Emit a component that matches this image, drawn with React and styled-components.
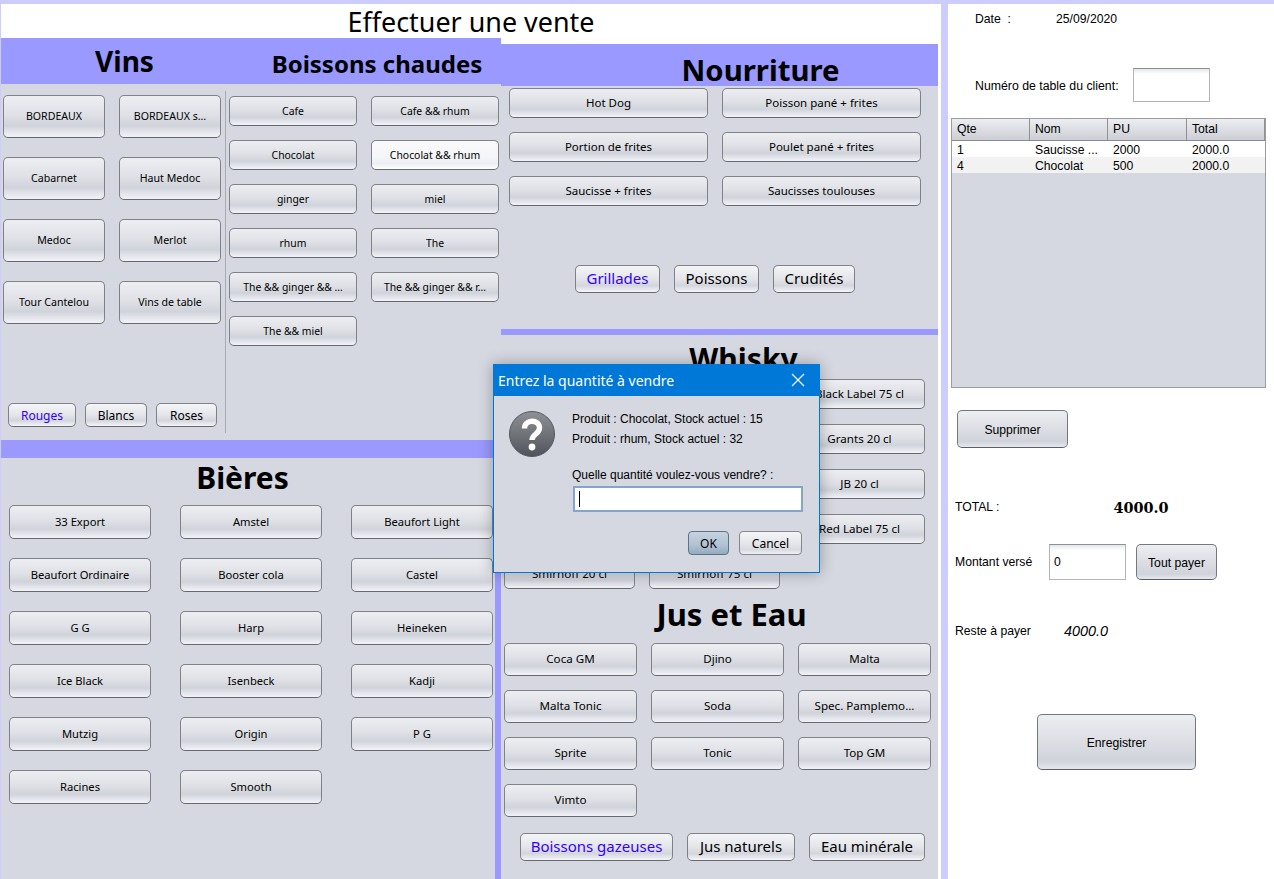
import React from "react";
import styled, { createGlobalStyle, css } from "styled-components";

const vins = ["BORDEAUX", "BORDEAUX s…", "Cabarnet", "Haut Medoc", "Medoc", "Merlot", "Tour Cantelou", "Vins de table"];
const chaudes = ["Cafe", "Cafe && rhum", "Chocolat", "Chocolat && rhum", "ginger", "miel", "rhum", "The", "The && ginger && …", "The && ginger && r…", "The && miel"];
const bieres = ["33 Export", "Amstel", "Beaufort Light", "Beaufort Ordinaire", "Booster cola", "Castel", "G G", "Harp", "Heineken", "Ice Black", "Isenbeck", "Kadji", "Mutzig", "Origin", "P G", "Racines", "Smooth"];
const nourriture = ["Hot Dog", "Poisson pané + frites", "Portion de frites", "Poulet pané + frites", "Saucisse + frites", "Saucisses toulouses"];
// the first cells of these rows sit behind the dialog, their labels can't be read
const whisky = ["", "", "Black Label 75 cl", "", "", "Grants 20 cl", "", "", "JB 20 cl", "", "", "Red Label 75 cl", "Smirnoff 20 cl", "Smirnoff 75 cl"];
const jus = ["Coca GM", "Djino", "Malta", "Malta Tonic", "Soda", "Spec. Pamplemo...", "Sprite", "Tonic", "Top GM", "Vimto"];

const App = () => (
  <Shell>
    <GlobalStyle />
    <Main>
      <PageTitle>Effectuer une vente</PageTitle>
      <Columns>
        <LeftColumn>
          <TopLeft>
            <Band $height={46}>
              <BandTitle $width={247} $size={28} $line={46}>Vins</BandTitle>
              <BandTitle $width={253} $size={24} $line={51} $pad={5}>Boissons chaudes</BandTitle>
            </Band>
            <TopLeftBody>
              <VinsPane>
                <ProductGrid $cols={2} $colW={102} $rowH={43} $rowGap={19} $colGap={14} $size={10.6} $lift={2}>
                  {vins.map((v) => <ProductButton key={v}>{v}</ProductButton>)}
                </ProductGrid>
                <TabRow $left={5} $gap={9} $top="auto">
                  <TabButton $w={68} $h={24} $size={12} $active>Rouges</TabButton>
                  <TabButton $w={62} $h={24} $size={12}>Blancs</TabButton>
                  <TabButton $w={61} $h={24} $size={12}>Roses</TabButton>
                </TabRow>
              </VinsPane>
              <ChaudesPane>
                <ProductGrid $cols={2} $colW={128} $rowH={30} $rowGap={14} $colGap={14} $size={10.4}>
                  {chaudes.map((c) => (
                    <ProductButton key={c} $selected={c === "Chocolat && rhum"}>{c}</ProductButton>
                  ))}
                </ProductGrid>
              </ChaudesPane>
            </TopLeftBody>
          </TopLeft>
          <Band $height={18} />
          <BottomLeft>
            <BieresPane>
              <SectionTitle $height={47} $line={39} $pad={0} $width={467} $size={30}>Bières</SectionTitle>
              <ProductGrid $cols={3} $colW={142} $rowH={34} $rowGap={19} $colGap={29} $size={11.2} $lift={2}>
                {bieres.map((b) => <ProductButton key={b}>{b}</ProductButton>)}
              </ProductGrid>
            </BieresPane>
            <Strip />
          </BottomLeft>
        </LeftColumn>

        <RightColumn>
          <NourritureBand><BandTitle $width={437} $size={29.3} $pad={82} $line={52}>Nourriture</BandTitle></NourritureBand>
          <NourritureBody>
            <ProductGrid $cols={2} $colW={199} $rowH={30} $rowGap={14} $colGap={14} $size={11.5} $lift={2}>
              {nourriture.map((n) => <ProductButton key={n}>{n}</ProductButton>)}
            </ProductGrid>
            <TabRow $left={66} $gap={14} $top="59px">
              <TabButton $w={85} $h={28} $size={15} $active>Grillades</TabButton>
              <TabButton $w={85} $h={28} $size={15}>Poissons</TabButton>
              <TabButton $w={82} $h={28} $size={15}>Crudités</TabButton>
            </TabRow>
          </NourritureBody>
          <Band $height={6} />
          <DrinksBody>
            <SectionTitle $height={44} $line={44} $pad={58} $width={421} $size={30} $shift={2}>Whisky</SectionTitle>
            <ProductGrid $cols={3} $colW={131} $rowH={30} $rowGap={15} $colGap={14} $size={11.6} $lift={2}>
              {whisky.map((w, i) => <ProductButton key={i}>{w}</ProductButton>)}
            </ProductGrid>
            <SectionTitle $height={54} $line={50} $pad={28} $width={427} $size={31}>Jus et Eau</SectionTitle>
            <ProductGrid $cols={3} $colW={133} $rowH={33} $rowGap={14} $colGap={14} $size={11.6} $lift={2}>
              {jus.map((j) => <ProductButton key={j}>{j}</ProductButton>)}
            </ProductGrid>
            <TabRow $left={16} $gap={14} $top="16px">
              <TabButton $w={153} $h={28} $size={15} $active>Boissons gazeuses</TabButton>
              <TabButton $w={108} $h={28} $size={15}>Jus naturels</TabButton>
              <TabButton $w={116} $h={28} $size={15}>Eau minérale</TabButton>
            </TabRow>
          </DrinksBody>
        </RightColumn>
      </Columns>
    </Main>

    <SidePanel>
      <DateRow>
        <DateLabel>Date&nbsp;&nbsp;:</DateLabel>
        <span>25/09/2020</span>
      </DateRow>
      <TableRow>
        <TableLabel>Numéro de table du client:</TableLabel>
        <Field $w={77} $h={34} />
      </TableRow>
      <SaleTable>
        <TableHead>
          <HeadCell $w={78}>Qte</HeadCell>
          <HeadCell $w={78}>Nom</HeadCell>
          <HeadCell $w={79}>PU</HeadCell>
          <HeadCell $w={78}>Total</HeadCell>
        </TableHead>
        <SaleRow><Cell $w={78}>1</Cell><Cell $w={78}>Saucisse ...</Cell><Cell $w={79}>2000</Cell><Cell $w={78}>2000.0</Cell></SaleRow>
        <SaleRow $alt><Cell $w={78}>4</Cell><Cell $w={78}>Chocolat</Cell><Cell $w={79}>500</Cell><Cell $w={78}>2000.0</Cell></SaleRow>
      </SaleTable>
      <ActionButton $w={111} $h={38} $left={6} $top={22}>Supprimer</ActionButton>
      <TotalRow>
        <span>TOTAL :</span>
        <TotalValue>4000.0</TotalValue>
      </TotalRow>
      <PayRow>
        <PayLabel>Montant versé</PayLabel>
        <Field $w={77} $h={36}>0</Field>
        <ActionButton $w={81} $h={36} $left={10} $top={0}>Tout payer</ActionButton>
      </PayRow>
      <RestRow>
        <RestLabel>Reste à payer</RestLabel>
        <RestValue>4000.0</RestValue>
      </RestRow>
      <ActionButton $w={159} $h={56} $left={86} $top={73}>Enregistrer</ActionButton>
    </SidePanel>

    <Dialog>
      <DialogBar>
        <span>Entrez la quantité à vendre</span>
        <svg width="14" height="14" viewBox="0 0 14 14">
          <path d="M1 1 L13 13 M13 1 L1 13" stroke="#fff" strokeWidth="1.1" fill="none" />
        </svg>
      </DialogBar>
      <DialogBody>
        <svg width="46" height="46" viewBox="0 0 46 46">
          <defs>
            <linearGradient id="help" x1="0" y1="0" x2="0" y2="1">
              <stop offset="0" stopColor="#8d9094" />
              <stop offset="0.55" stopColor="#6d7075" />
              <stop offset="1" stopColor="#50535a" />
            </linearGradient>
          </defs>
          <circle cx="23" cy="23" r="22.5" fill="url(#help)" stroke="#55585d" />
          <path d="M15.5 17.5 C15.5 8 30.5 8 30.5 17 C30.5 23 23 23 23 29" fill="none" stroke="#fff" strokeWidth="5.4" />
          <circle cx="23" cy="36" r="3.4" fill="#fff" />
        </svg>
        <DialogContent>
          <DialogLine>Produit : Chocolat, Stock actuel : 15</DialogLine>
          <DialogLine>Produit : rhum, Stock actuel : 32</DialogLine>
          <DialogPrompt>Quelle quantité voulez-vous vendre? :</DialogPrompt>
          <QuantityInput><Caret /></QuantityInput>
          <DialogActions>
            <DialogButton $w={41} $primary>OK</DialogButton>
            <DialogButton $w={63}>Cancel</DialogButton>
          </DialogActions>
        </DialogContent>
      </DialogBody>
    </Dialog>
  </Shell>
);

const GlobalStyle = createGlobalStyle`
  html, body {
    margin: 0;
    overflow: hidden;
  }
  * {
    box-sizing: border-box;
  }
`;

const panelGrey = "#d5d8e0";
const bandBlue = "#9999ff";
const lavender = "#ccccff";

const Shell = styled.div`
  position: relative;
  display: flex;
  width: 1274px;
  height: 879px;
  padding: 4px 0 0 1px;
  background-color: ${lavender};
  overflow: hidden;
  font-family: "Noto Sans", sans-serif;
  color: #000;
`;

const Main = styled.div`
  width: 940px;
  height: 875px;
  background-color: #fff;
`;

const PageTitle = styled.div`
  height: 34px;
  font-size: 26.9px;
  line-height: 36px;
  text-align: center;
`;

const Columns = styled.div`
  display: flex;
  width: 937px;
  height: 841px;
`;

const LeftColumn = styled.div`
  display: flex;
  flex-direction: column;
  width: 500px;
`;

const RightColumn = styled.div`
  display: flex;
  flex-direction: column;
  width: 437px;
  padding-top: 6px;
`;

const TopLeft = styled.div`
  height: 402px;
  background-color: ${panelGrey};
`;

const Band = styled.div`
  display: flex;
  height: ${({ $height }) => $height}px;
  background-color: ${bandBlue};
  flex-shrink: 0;
`;

const NourritureBand = styled(Band).attrs({ $height: 42 })``;

const BandTitle = styled.div`
  width: ${({ $width }) => $width}px;
  padding-left: ${({ $pad }) => $pad || 0}px;
  font-size: ${({ $size }) => $size}px;
  font-weight: 700;
  line-height: ${({ $line }) => $line}px;
  text-align: center;
  white-space: nowrap;
`;

const TopLeftBody = styled.div`
  display: flex;
  height: 356px;
  padding: 7px 0;
`;

const VinsPane = styled.div`
  display: flex;
  flex-direction: column;
  width: 224px;
  padding: 4px 0 6px 2px;
`;

const ChaudesPane = styled.div`
  width: 275px;
  padding: 5px 0 0 3px;
  border-left: 1px solid #a9abb0;
`;

const ProductGrid = styled.div`
  display: grid;
  grid-template-columns: repeat(${({ $cols }) => $cols}, ${({ $colW }) => $colW}px);
  grid-auto-rows: ${({ $rowH }) => $rowH}px;
  row-gap: ${({ $rowGap }) => $rowGap}px;
  column-gap: ${({ $colGap }) => $colGap}px;
  font-size: ${({ $size }) => $size}px;
  & > button {
    padding-bottom: ${({ $lift }) => $lift || 0}px;
  }
`;

const bevel = css`
  padding: 0 2px;
  border: 1px solid #808287;
  border-bottom-color: #67696e;
  border-radius: 5px;
  color: #000;
  font-family: "Noto Sans", sans-serif;
  white-space: nowrap;
  overflow: hidden;
  cursor: pointer;
`;

const ProductButton = styled.button`
  ${bevel}
  font-size: inherit;
  background: ${({ $selected }) =>
    $selected
      ? "linear-gradient(#fafafc 0%, #f4f5f8 60%, #eceef3 80%, #fff 100%)"
      : "linear-gradient(#eceef2 0%, #dfe1e6 45%, #d0d3da 72%, #e6e8ee 90%, #f2f3f7 100%)"};
`;

const TabRow = styled.div`
  display: flex;
  gap: ${({ $gap }) => $gap}px;
  padding-left: ${({ $left }) => $left}px;
  margin-top: ${({ $top }) => $top};
`;

const TabButton = styled.button`
  ${bevel}
  width: ${({ $w }) => $w}px;
  height: ${({ $h }) => $h}px;
  padding-bottom: ${({ $size }) => ($size > 12 ? 2 : 0)}px;
  font-size: ${({ $size }) => $size}px;
  color: ${({ $active }) => ($active ? "#3300ff" : "#000")};
  background: linear-gradient(#f4f5f7 0%, #e3e5ea 50%, #d3d6dc 75%, #f4f5f9 100%);
`;

const BottomLeft = styled.div`
  display: flex;
  flex: 1;
`;

const BieresPane = styled.div`
  width: 494px;
  padding-left: 8px;
  background-color: ${panelGrey};
`;

const Strip = styled.div`
  width: 6px;
  background-color: ${bandBlue};
`;

const SectionTitle = styled.div`
  width: ${({ $width }) => $width}px;
  height: ${({ $height }) => $height}px;
  padding-left: ${({ $pad }) => $pad}px;
  padding-top: ${({ $shift }) => $shift || 0}px;
  font-size: ${({ $size }) => $size}px;
  font-weight: 700;
  line-height: ${({ $line }) => $line}px;
  text-align: center;
  white-space: nowrap;
`;

const NourritureBody = styled.div`
  height: 243px;
  padding: 2px 0 0 8px;
  background-color: ${panelGrey};
`;

const DrinksBody = styled.div`
  flex: 1;
  padding-left: 3px;
  background-color: ${panelGrey};
`;

const SidePanel = styled.div`
  width: 326px;
  height: 875px;
  margin-left: 7px;
  padding: 0 8px 0 3px;
  background-color: #fff;
  font-family: "Liberation Sans", Arial, sans-serif;
  font-size: 12.2px;
  color: #000;
`;

const DateRow = styled.div`
  display: flex;
  height: 30px;
  padding-left: 24px;
  align-items: center;
`;

const DateLabel = styled.span`
  width: 81px;
`;

const TableRow = styled.div`
  display: flex;
  align-items: center;
  gap: 14px;
  margin-top: 34px;
  padding-left: 24px;
  font-size: 12.3px;
`;

const TableLabel = styled.span`
  padding-top: 2px;
`;

const Field = styled.div`
  display: flex;
  align-items: center;
  width: ${({ $w }) => $w}px;
  height: ${({ $h }) => $h}px;
  padding-left: 4px;
  background: linear-gradient(#e4e6ea 0, #fff 5px);
  border: 1px solid #b4b5b8;
  border-top-color: #8e9094;
`;

const SaleTable = styled.div`
  width: 315px;
  height: 270px;
  margin-top: 16px;
  background-color: ${panelGrey};
  border: 1px solid #9a9ca2;
`;

const TableHead = styled.div`
  display: flex;
  height: 22px;
  border-bottom: 1px solid #8a8c92;
  background: linear-gradient(#eceef1, #ccced5);
`;

const HeadCell = styled.div`
  width: ${({ $w }) => $w}px;
  padding-left: 5px;
  line-height: 21px;
  border-right: 1px solid #8f9197;
`;

const SaleRow = styled.div`
  display: flex;
  height: 16px;
  background-color: ${({ $alt }) => ($alt ? "#f2f2f2" : "#fff")};
`;

const Cell = styled.div`
  width: ${({ $w }) => $w}px;
  padding-left: 5px;
  line-height: 18px;
  white-space: nowrap;
`;

const ActionButton = styled.button`
  width: ${({ $w }) => $w}px;
  height: ${({ $h }) => $h}px;
  margin-left: ${({ $left }) => $left}px;
  margin-top: ${({ $top }) => $top}px;
  padding: 2px 0 0;
  border: 1px solid #76787d;
  border-bottom-color: #5c5e63;
  border-radius: 5px;
  background: linear-gradient(#eceef1 0%, #dcdee4 50%, #d0d3da 85%, #e6e8ee 100%);
  color: #000;
  font-family: "Liberation Sans", Arial, sans-serif;
  font-size: 12.2px;
  display: block;
  flex-shrink: 0;
`;

const TotalRow = styled.div`
  display: flex;
  align-items: center;
  margin-top: 49px;
  padding-left: 4px;
  height: 20px;
`;

const TotalValue = styled.span`
  margin-left: 114px;
  font-family: "DejaVu Serif", serif;
  font-size: 14.4px;
  font-weight: 700;
`;

const PayRow = styled.div`
  display: flex;
  align-items: center;
  margin-top: 27px;
  padding-left: 4px;
`;

const PayLabel = styled.span`
  width: 94px;
`;

const RestRow = styled.div`
  display: flex;
  align-items: center;
  height: 20px;
  margin-top: 41px;
  padding-left: 4px;
`;

const RestLabel = styled.span`
  width: 109px;
`;

const RestValue = styled.span`
  font-size: 14.4px;
  font-style: italic;
`;

const Dialog = styled.div`
  position: absolute;
  left: 493px;
  top: 364px;
  width: 327px;
  height: 209px;
  background-color: ${panelGrey};
  border: 1px solid #0078d7;
  box-shadow: 0 0 14px rgba(0, 0, 0, 0.3);
  font-family: "Liberation Sans", Arial, sans-serif;
  font-size: 12px;
  color: #000;
`;

const DialogBar = styled.div`
  display: flex;
  align-items: center;
  justify-content: space-between;
  height: 32px;
  margin: -1px -1px 0;
  padding: 0 15px 0 5px;
  background-color: #0078d7;
  color: #fff;
  font-family: "Noto Sans", sans-serif;
  font-size: 14px;
`;

const DialogBody = styled.div`
  display: flex;
  padding: 15px 0 0 15px;
`;

const DialogContent = styled.div`
  display: flex;
  flex-direction: column;
  width: 230px;
  margin: -2px 0 0 17px;
`;

const DialogLine = styled.div`
  height: 20px;
  line-height: 20px;
`;

const DialogPrompt = styled(DialogLine)`
  margin-top: 16px;
`;

const QuantityInput = styled.div`
  display: flex;
  align-items: center;
  flex-shrink: 0;
  width: 230px;
  height: 26px;
  margin: 1px 0 0 1px;
  padding-left: 4px;
  background-color: #fff;
  border: 2px solid #84a6cc;
`;

const Caret = styled.span`
  width: 1px;
  height: 16px;
  background-color: #000;
`;

const DialogActions = styled.div`
  display: flex;
  justify-content: flex-end;
  gap: 10px;
  margin-top: 19px;
`;

const DialogButton = styled.button`
  width: ${({ $w }) => $w}px;
  height: 24px;
  padding: 0;
  border: 1px solid ${({ $primary }) => ($primary ? "#5d7488" : "#85878c")};
  border-radius: 4px;
  background: ${({ $primary }) =>
    $primary
      ? "linear-gradient(#c6d3e0 0%, #b0c2d3 60%, #94aabf 100%)"
      : "linear-gradient(#f4f5f7 0%, #e3e5ea 55%, #d7dae0 80%, #f0f1f5 100%)"};
  color: #000;
  font-family: "Noto Sans", sans-serif;
  font-size: 12px;
`;

export default App;
